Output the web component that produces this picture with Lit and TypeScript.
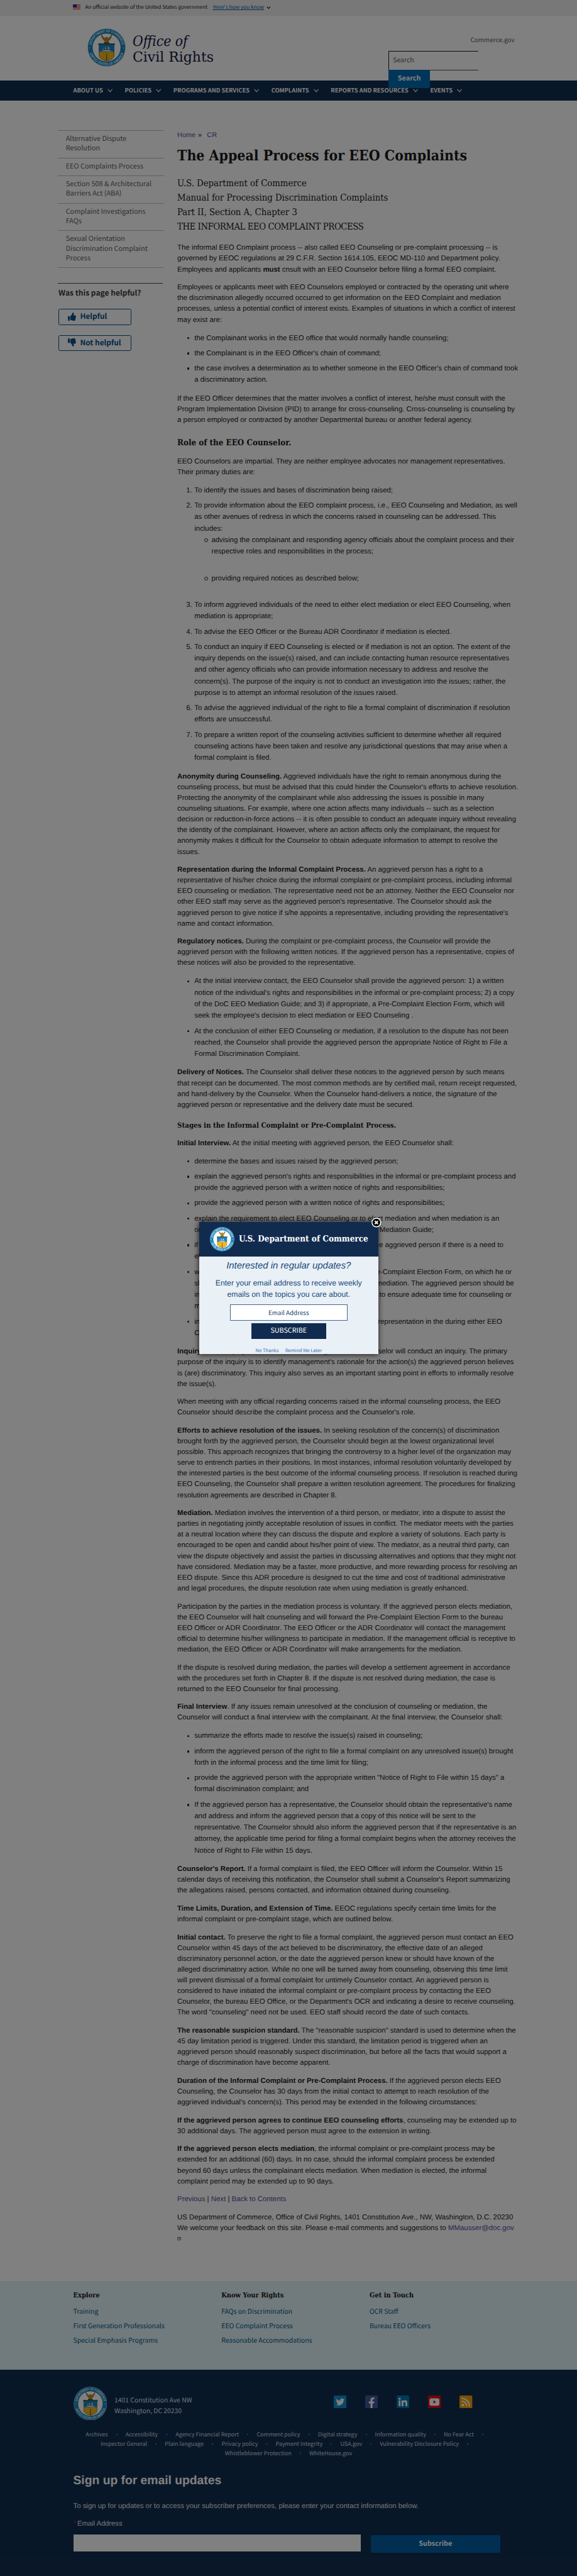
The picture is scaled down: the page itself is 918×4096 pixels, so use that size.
import { LitElement, html, css, svg, nothing } from "lit";
import { customElement, property } from "lit/decorators.js";

type Line = string | [string, string, number];
interface Item { lines: Line[]; sub?: string[][]; }
type Block =
  | { k: "p"; b?: string; t: Line[] }
  | { k: "ul" | "ol"; items: Item[] }
  | { k: "h"; t: string; c: string };

const blocks: Block[] = [
  { k: "p", t: ["The informal EEO Complaint process -- also called EEO Counseling or pre-complaint processing -- is", "governed by EEOC regulations at 29 C.F.R. Section 1614.105, EEOC MD-110 and Department policy.", "Employees and applicants *must* cnsult with an EEO Counselor before filing a formal EEO complaint."] },
  { k: "p", t: ["Employees or applicants meet with EEO Counselors employed or contracted by the operating unit where", "the discrimination allegedly occurred occurred to get information on the EEO Complaint and mediation", "processes, unless a potential conflict of interest exists. Examples of situations in which a conflict of interest", "may exist are:"] },
  { k: "ul", items: [
    { lines: ["the Complainant works in the EEO office that would normally handle counseling;"] },
    { lines: ["the Complainant is in the EEO Officer's chain of command;"] },
    { lines: ["the case involves a determination as to whether someone in the EEO Officer's chain of command took", "a discriminatory action."] }] },
  { k: "p", t: ["If the EEO Officer determines that the matter involves a conflict of interest, he/she must consult with the", "Program Implementation Division (PID) to arrange for cross-counseling. Cross-counseling is counseling by", "a person employed or contracted by another Departmental bureau or another federal agency."] },
  { k: "h", c: "role", t: "Role of the EEO Counselor." },
  { k: "p", t: ["EEO Counselors are impartial. They are neither employee advocates nor management representatives.", "Their primary duties are:"] },
  { k: "ol", items: [
    { lines: ["To identify the issues and bases of discrimination being raised;"] },
    { lines: ["To provide information about the EEO complaint process, i.e., EEO Counseling and Mediation, as well", "as other avenues of redress in which the concerns raised in counseling can be addressed. This", "includes:"],
      sub: [["advising the complainant and responding agency officials about the complaint process and their", "respective roles and responsibilities in the process;"], ["providing required notices as described below;"]] },
    { lines: ["To inform aggrieved individuals of the need to either elect mediation or elect EEO Counseling, when", "mediation is appropriate;"] },
    { lines: ["To advise the EEO Officer or the Bureau ADR Coordinator if mediation is elected."] },
    { lines: ["To conduct an inquiry if EEO Counseling is elected or if mediation is not an option. The extent of the", "inquiry depends on the issue(s) raised, and can include contacting human resource representatives", "and other agency officials who can provide information necessary to address and resolve the", "concern(s). The purpose of the inquiry is not to conduct an investigation into the issues; rather, the", "purpose is to attempt an informal resolution of the issues raised."] },
    { lines: ["To advise the aggrieved individual of the right to file a formal complaint of discrimination if resolution", "efforts are unsuccessful."] },
    { lines: ["To prepare a written report of the counseling activities sufficient to determine whether all required", "counseling actions have been taken and resolve any jurisdictional questions that may arise when a", "formal complaint is filed."] }] },
  { k: "p", b: "Anonymity during Counseling.", t: [" Aggrieved individuals have the right to remain anonymous during the", "counseling process, but must be advised that this could hinder the Counselor's efforts to achieve resolution.", "Protecting the anonymity of the complainant while also addressing the issues is possible in many", "counseling situations. For example, where one action affects many individuals -- such as a selection", "decision or reduction-in-force actions -- it is often possible to conduct an adequate inquiry without revealing", "the identity of the complainant. However, where an action affects only the complainant, the request for", "anonymity makes it difficult for the Counselor to obtain adequate information to attempt to resolve the", "issues."] },
  { k: "p", b: "Representation during the Informal Complaint Process.", t: [" An aggrieved person has a right to a", "representative of his/her choice during the informal complaint or pre-complaint process, including informal", "EEO counseling or mediation. The representative need not be an attorney. Neither the EEO Counselor nor", "other EEO staff may serve as the aggrieved person's representative. The Counselor should ask the", "aggrieved person to give notice if s/he appoints a representative, including providing the representative's", "name and contact information."] },
  { k: "p", b: "Regulatory notices.", t: [" During the complaint or pre-complaint process, the Counselor will provide the", "aggrieved person with the following written notices. If the aggrieved person has a representative, copies of", "these notices will also be provided to the representative."] },
  { k: "ul", items: [
    { lines: ["At the initial interview contact, the EEO Counselor shall provide the aggrieved person: 1) a written", "notice of the individual's rights and responsibilities in the informal or pre-complaint process; 2) a copy", "of the DoC EEO Mediation Guide; and 3) if appropriate, a Pre-Complaint Election Form, which will", "seek the employee's decision to elect mediation or EEO Counseling ."] },
    { lines: ["At the conclusion of either EEO Counseling or mediation, if a resolution to the dispute has not been", "reached, the Counselor shall provide the aggrieved person the appropriate Notice of Right to File a", "Formal Discrimination Complaint."] }] },
  { k: "p", b: "Delivery of Notices.", t: [" The Counselor shall deliver these notices to the aggrieved person by such means", "that receipt can be documented. The most common methods are by certified mail, return receipt requested,", "and hand-delivery by the Counselor. When the Counselor hand-delivers a notice, the signature of the", "aggrieved person or representative and the delivery date must be secured."] },
  { k: "h", c: "stages", t: "Stages in the Informal Complaint or Pre-Complaint Process." },
  { k: "p", b: "Initial Interview.", t: [" At the initial meeting with aggrieved person, the EEO Counselor shall:"] },
  { k: "ul", items: [
    { lines: ["determine the bases and issues raised by the aggrieved person;"] },
    { lines: ["explain the aggrieved person's rights and responsibilities in the informal or pre-complaint process and", "provide the aggrieved person with a written notice of rights and responsibilities;"] },
    { lines: ["provide the aggrieved person with a written notice of rights and responsibilities;"] },
    { lines: ["explain the requirement to elect EEO Counseling or to elect mediation and when mediation is an", ["or", "Mediation Guide;", 560]] },
    { lines: [["if", "the aggrieved person if there is a need to", 723.2], "elect"] },
    { lines: [["with", "Pre-Complaint Election Form, on which he or", 742.8], ["she", "mediation. The aggrieved person should be", 748], ["in", "to ensure adequate time for counseling or", 742.8], "me"] },
    { lines: [["in", "representation in the during either EEO", 720.5], "Co"] }] },
  { k: "p", b: "Inquiry.", t: [" If the employee elects EEO counseling, the EEO Counselor will conduct an inquiry. The primary", "purpose of the inquiry is to identify management's rationale for the action(s) the aggrieved person believes", "is (are) discriminatory. This inquiry also serves as an important starting point in efforts to informally resolve", "the issue(s)."] },
  { k: "p", t: ["When meeting with any official regarding concerns raised in the informal counseling process, the EEO", "Counselor should describe the complaint process and the Counselor's role."] },
  { k: "p", b: "Efforts to achieve resolution of the issues.", t: [" In seeking resolution of the concern(s) of discrimination", "brought forth by the aggrieved person, the Counselor should begin at the lowest organizational level", "possible. This approach recognizes that bringing the controversy to a higher level of the organization may", "serve to entrench parties in their positions. In most instances, informal resolution voluntarily developed by", "the interested parties is the best outcome of the informal counseling process. If resolution is reached during", "EEO Counseling, the Counselor shall prepare a written resolution agreement. The procedures for finalizing", "resolution agreements are described in Chapter 8."] },
  { k: "p", b: "Mediation.", t: [" Mediation involves the intervention of a third person, or mediator, into a dispute to assist the", "parties in negotiating jointly acceptable resolution of issues in conflict. The mediator meets with the parties", "at a neutral location where they can discuss the dispute and explore a variety of solutions. Each party is", "encouraged to be open and candid about his/her point of view. The mediator, as a neutral third party, can", "view the dispute objectively and assist the parties in discussing alternatives and options that they might not", "have considered. Mediation may be a faster, more productive, and more rewarding process for resolving an", "EEO dispute. Since this ADR procedure is designed to cut the time and cost of traditional administrative", "and legal procedures, the dispute resolution rate when using mediation is greatly enhanced."] },
  { k: "p", t: ["Participation by the parties in the mediation process is voluntary. If the aggrieved person elects mediation,", "the EEO Counselor will halt counseling and will forward the Pre-Complaint Election Form to the bureau", "EEO Officer or ADR Coordinator. The EEO Officer or the ADR Coordinator will contact the management", "official to determine his/her willingness to participate in mediation. If the management official is receptive to", "mediation, the EEO Officer or ADR Coordinator will make arrangements for the mediation."] },
  { k: "p", t: ["If the dispute is resolved during mediation, the parties will develop a settlement agreement in accordance", "with the procedures set forth in Chapter 8. If the dispute is not resolved during mediation, the case is", "returned to the EEO Counselor for final processing."] },
  { k: "p", b: "Final Interview", t: [". If any issues remain unresolved at the conclusion of counseling or mediation, the", "Counselor will conduct a final interview with the complainant. At the final interview, the Counselor shall:"] },
  { k: "ul", items: [
    { lines: ["summarize the efforts made to resolve the issue(s) raised in counseling;"] },
    { lines: ["inform the aggrieved person of the right to file a formal complaint on any unresolved issue(s) brought", "forth in the informal process and the time limit for filing;"] },
    { lines: ["provide the aggrieved person with the appropriate written \"Notice of Right to File within 15 days\" a", "formal discrimination complaint; and"] },
    { lines: ["If the aggrieved person has a representative, the Counselor should obtain the representative's name", "and address and inform the aggrieved person that a copy of this notice will be sent to the", "representative. The Counselor should also inform the aggrieved person that if the representative is an", "attorney, the applicable time period for filing a formal complaint begins when the attorney receives the", "Notice of Right to File within 15 days."] }] },
  { k: "p", b: "Counselor's Report.", t: [" If a formal complaint is filed, the EEO Officer will inform the Counselor. Within 15", "calendar days of receiving this notification, the Counselor shall submit a Counselor's Report summarizing", "the allegations raised, persons contacted, and information obtained during counseling."] },
  { k: "p", b: "Time Limits, Duration, and Extension of Time.", t: [" EEOC regulations specify certain time limits for the", "informal complaint or pre-complaint stage, which are outlined below."] },
  { k: "p", b: "Initial contact.", t: [" To preserve the right to file a formal complaint, the aggrieved person must contact an EEO", "Counselor within 45 days of the act believed to be discriminatory, the effective date of an alleged", "discriminatory personnel action, or the date the aggrieved person knew or should have known of the", "alleged discriminatory action. While no one will be turned away from counseling, observing this time limit", "will prevent dismissal of a formal complaint for untimely Counselor contact. An aggrieved person is", "considered to have initiated the informal complaint or pre-complaint process by contacting the EEO", "Counselor, the bureau EEO Office, or the Department's OCR and indicating a desire to receive counseling.", "The word \"counseling\" need not be used. EEO staff should record the date of such contacts."] },
  { k: "p", b: "The reasonable suspicion standard.", t: [" The \"reasonable suspicion\" standard is used to determine when the", "45 day limitation period is triggered. Under this standard, the limitation period is triggered when an", "aggrieved person should reasonably suspect discrimination, but before all the facts that would support a", "charge of discrimination have become apparent."] },
  { k: "p", b: "Duration of the Informal Complaint or Pre-Complaint Process.", t: [" If the aggrieved person elects EEO", "Counseling, the Counselor has 30 days from the initial contact to attempt to reach resolution of the", "aggrieved individual's concern(s). This period may be extended in the following circumstances:"] },
  { k: "p", b: "If the aggrieved person agrees to continue EEO counseling efforts", t: [", counseling may be extended up to", "30 additional days. The aggrieved person must agree to the extension in writing."] },
  { k: "p", b: "If the aggrieved person elects mediation", t: [", the informal complaint or pre-complaint process may be", "extended for an additional (60) days. In no case, should the informal complaint process be extended", "beyond 60 days unless the complainant elects mediation. When mediation is elected, the informal", "complaint period may be extended up to 90 days."] },
];

const inline = (s: string) => s.split("*").map((part, i) => (i % 2 ? html`<b>${part}</b>` : part));
const lines = (ls: Line[], lead?: string) =>
  ls.map((l, i) => html`<div class="line">${i === 0 && lead ? html`<b>${lead}</b>` : nothing}${
    typeof l === "string" ? inline(l) : html`<span class="spread" style="width:${l[2]}px"><span>${l[0]}</span><span>${l[1]}</span></span>`}</div>`);

@customElement("doc-seal")
class DocSeal extends LitElement {
  @property({ type: Number }) size = 90;
  static styles = css`
    :host { display: block; flex: none; }
    svg { display: block; }
    .ring { font: 700 9.6px "Liberation Sans", Arial, sans-serif; fill: #e6f4fb; letter-spacing: 0.35px; }
  `;
  render() {
    return html`<svg width=${this.size} height=${this.size} viewBox="0 0 100 100">
      <circle cx="50" cy="50" r="49.5" fill="#cfe6f2" />
      <circle cx="50" cy="50" r="48.6" fill="#1587c1" />
      <circle cx="50" cy="50" r="37" fill="#fff" stroke="#0d5c8a" stroke-width="1" />
      <defs>
        <path id="top" d="M 10.2 50 A 39.8 39.8 0 0 1 89.8 50" />
        <path id="bot" d="M 3.6 50 A 46.4 46.4 0 0 0 96.4 50" />
      </defs>
      <text class="ring"><textPath href="#top" startOffset="50%" text-anchor="middle" textLength="112" lengthAdjust="spacingAndGlyphs">DEPARTMENT OF COMMERCE</textPath></text>
      <text class="ring"><textPath href="#bot" startOffset="50%" text-anchor="middle" textLength="116" lengthAdjust="spacingAndGlyphs">UNITED STATES OF AMERICA</textPath></text>
      <circle cx="5.6" cy="51" r="1.3" fill="#fff" /><circle cx="94.4" cy="51" r="1.3" fill="#fff" />
      <path d="M36 16 q2 12 10 18 l-2 4 h12 l-2 -4 q8 -6 10 -18 q-5 8 -11 11 q0 -4 -3 -4 q-3 0 -3 4 q-6 -3 -11 -11z" fill="#b98a1c" stroke="#5c4308" stroke-width=".9" />
      <path d="M43 38.5 h14" stroke="#3c2c10" stroke-width="2" />
      <path d="M29 40 h42 v3 h-1.5 v28 q0 9 -19.5 14 q-19.5 -5 -19.5 -14 v-28 h-1.5z" fill="#f2b81f" stroke="#4a3a17" stroke-width="1" />
      <path d="M30 41 h40 v20 h-40z" fill="#1b83bd" />
      <path d="M28.5 41 h43" stroke="#123a55" stroke-width="1.6" />
      <path d="M38 56 h24 l-3 4 h-18z M40 54 l3 -7 v7z M45 54 l2 -9 3 9z M52 54 l2 -9 5 9z" fill="#e8f1f5" stroke="#2b4a5c" stroke-width=".6" />
      <path d="M35 59.5 q7 -2 15 0 t15 0" stroke="#cfe3ee" stroke-width="1" fill="none" />
      <path d="M48.6 83 l.7 -18 h1.6 l.7 18z" fill="#7b5a10" />
    </svg>`;
  }
}

const nav = ["ABOUT US", "POLICIES", "PROGRAMS AND SERVICES", "COMPLAINTS", "REPORTS AND RESOURCES", "EVENTS"];
const side = [["Alternative Dispute", "Resolution"], ["EEO Complaints Process"], ["Section 508 & Architectural", "Barriers Act (ABA)"], ["Complaint Investigations", "FAQs"], ["Sexual Orientation", "Discrimination Complaint", "Process"]];
const cols: [string, string[]][] = [
  ["Explore", ["Training", "First Generation Professionals", "Special Emphasis Programs"]],
  ["Know Your Rights", ["FAQs on Discrimination", "EEO Complaint Process", "Reasonable Accommodations"]],
  ["Get in Touch", ["OCR Staff", "Bureau EEO Officers"]],
];
const legal = [
  ["Archives", "Accessibility", "Agency Financial Report", "Comment policy", "Digital strategy", "Information quality", "No Fear Act", ""],
  ["Inspector General", "Plain language", "Privacy policy", "Payment Integrity", "USA.gov", "Vulnerability Disclosure Policy", ""],
  ["Whistleblower Protection", "WhiteHouse.gov"],
];
const thumb = "M104 224H24c-13.255 0-24 10.745-24 24v240c0 13.255 10.745 24 24 24h80c13.255 0 24-10.745 24-24V248c0-13.255-10.745-24-24-24zM64 472c-13.255 0-24-10.745-24-24s10.745-24 24-24 24 10.745 24 24-10.745 24-24 24zM384 81.452c0 42.416-25.97 66.208-33.277 94.548h101.723c33.397 0 59.397 27.746 59.553 58.098.084 17.938-7.546 37.249-19.439 49.197l-.11.11c9.836 23.337 8.237 56.037-9.308 79.469 8.681 25.895-.069 57.704-16.382 74.757 4.298 17.598 2.244 32.575-6.148 44.632C440.202 511.587 389.616 512 346.839 512l-2.845-.001c-48.287-.017-87.806-17.598-119.56-31.725-15.957-7.099-36.821-15.887-52.651-16.178-6.54-.12-11.783-5.457-11.783-11.998v-213.77c0-3.2 1.282-6.271 3.558-8.521 39.614-39.144 56.648-80.587 89.117-113.111 14.804-14.832 20.188-37.236 25.393-58.902C282.515 39.293 291.817 0 312 0c24 0 72 8 72 81.452z";
const social = [
  svg`<rect width="30" height="30" rx="3" fill="#0f8fd0"/><path transform="translate(5 5) scale(.84)" fill="#fff" d="M23.953 4.57a10 10 0 01-2.825.775 4.958 4.958 0 002.163-2.723c-.951.555-2.005.959-3.127 1.184a4.92 4.92 0 00-8.384 4.482C7.69 8.095 4.067 6.13 1.64 3.162a4.822 4.822 0 00-.666 2.475c0 1.71.87 3.213 2.188 4.096a4.904 4.904 0 01-2.228-.616v.06a4.923 4.923 0 003.946 4.827 4.996 4.996 0 01-2.212.085 4.936 4.936 0 004.604 3.417 9.867 9.867 0 01-6.102 2.105c-.39 0-.779-.023-1.17-.067a13.995 13.995 0 007.557 2.209c9.053 0 13.998-7.496 13.998-13.985 0-.21 0-.42-.015-.63A9.935 9.935 0 0024 4.59z"/>`,
  svg`<rect width="30" height="30" rx="3" fill="#46579c"/><path fill="#fff" d="M12.5 30V18.5H8.5V14h4v-3.4c0-3.7 2.3-5.8 5.7-5.8 1.6 0 2.9.1 3.4.2v4h-2.4c-1.8 0-2.2.9-2.2 2.2V14h4.4l-.6 4.5h-3.8V30z"/>`,
  svg`<rect width="30" height="30" rx="3" fill="#0077b0"/><circle cx="7" cy="7.6" r="2.5" fill="#fff"/><rect x="4.9" y="11.5" width="4.2" height="13.5" fill="#fff"/><path fill="#fff" d="M11.7 11.5h4v1.9c.6-1.1 2-2.2 4-2.2 4.2 0 5.3 2.8 5.3 6.4V25h-4.2v-6.6c0-1.6 0-3.5-2.2-3.5s-2.7 1.7-2.7 3.4V25h-4.2z"/>`,
  svg`<rect width="30" height="30" rx="2" fill="#e20c0c"/><rect x="3.5" y="6.8" width="23" height="17" rx="4" fill="#fff"/><path fill="#c00" d="M12.7 11.3v7.6l6-3.8z"/>`,
  svg`<rect width="30" height="30" rx="3" fill="#f5a000"/><circle cx="7.7" cy="22.3" r="3" fill="#fff"/><path fill="none" stroke="#fff" stroke-width="3.2" d="M5 13.2a11.8 11.8 0 0 1 11.8 11.8M5 6.6a18.4 18.4 0 0 1 18.4 18.4"/>`,
];

@customElement("app-root")
class AppRoot extends LitElement {
  static styles = css`
    :host { display: block; background: #fff; overflow: hidden; }
    * { box-sizing: border-box; }
    .page { zoom: 0.6797; position: relative; height: 6027px; color: #1b1b1b; background: #fff; text-rendering: geometricPrecision; white-space: nowrap;
      font: 400 16.8px/25.2px "Liberation Sans", Arial, sans-serif; }
    .cjk { font-family: "Noto Sans CJK JP", "Open Sans", sans-serif; }
    .serif { font-family: "DejaVu Serif Condensed", "DejaVu Serif", serif; font-stretch: condensed; }
    .banner { height: 37px; background: #f0f0f0; display: flex; align-items: center; padding: 0 0 2px 170px; font-size: 12.08px; line-height: 16px; }
    .banner svg.flag { margin-right: 11px; }
    .banner a { color: #005ea2; text-decoration: underline; margin: 0 6px 0 12.5px; }
    header { height: 152px; display: flex; align-items: flex-start; padding-left: 204.5px; position: relative; z-index: 1; }
    header doc-seal { margin-top: 29.5px; }
    .name { margin: 41px 0 0 16px; width: 599px; color: #15183f; line-height: 38.3px; }
    .name i { display: block; font-size: 33.4px; }
    .name span { display: block; font: 400 32.3px/38.3px "DejaVu Serif", serif; }
    .util { width: 295px; }
    .util .site { text-align: right; font-size: 14.76px; line-height: 20px; margin-top: 46px; color: #5c5c5c; }
    .find { width: 210px; height: 46px; margin-top: 16px; border: 2px solid #1b1b1b; border-right: 0; border-bottom-color: #555; padding-left: 9px; font-size: 15.4px; line-height: 41px; color: #5d5d5d; }
    .go { width: 97px; height: 42.5px; margin-top: -1px; background: #006cb2; color: #fff; border-radius: 0 4px 4px 0; font-weight: 700; font-size: 16px; line-height: 41px; text-align: center; }
    nav { height: 47px; background: #112e51; display: flex; align-items: center; padding: 0 0 2px 171.4px; color: #fff; font-weight: 700; font-size: 13.78px; line-height: 20px; }
    nav div { display: flex; align-items: center; margin-right: 28.5px; }
    nav svg { margin-left: 10px; }
    main { display: flex; height: 5100px; padding-left: 136px; }
    aside { width: 279px; padding-top: 68.3px; }
    .menu { width: 248px; border-top: 1px solid #bdbdbd; color: #626262; font-size: 16.05px; line-height: 22.8px; }
    .menu div.item { padding: 7.6px 18px 9.7px; border-bottom: 1px solid #bdbdbd; }
    .poll { width: 245px; margin-top: 34px; border-top: 1px solid #4a4a4a; padding: 9px 1px 0; }
    .poll h4 { margin: 0 0 25px; font-size: 17.72px; line-height: 26px; color: #3d3d3d; }
    .vote { width: 171px; height: 37px; margin-bottom: 24.3px; border: 2px solid #00508f; border-radius: 4px; display: flex; align-items: center; padding: 0 0 2px 21px; gap: 9px; color: #00508f; font-weight: 700; font-size: 17.47px; line-height: 26px; }
    .flip { transform: scaleY(-1); }
    article { width: 820px; }
    .crumb { padding-top: 68px; font-size: 16px; line-height: 26px; color: #5b459c; display: flex; }
    .crumb i { color: #1b1b1b; font-style: normal; margin: 0 12px 0 6px; }
    h1 { margin: 15px 0 0; font-size: 33.69px; line-height: 44px; font-weight: 700; }
    .intro { margin: 22.9px 0 20.2px; line-height: 34.1px; font-size: 21.7px; }
    .intro div:last-child { letter-spacing: -0.64px; }
    p { margin: 0 0 16.8px; }
    h3 { margin: 0; line-height: 28px; font-weight: 700; }
    .role { font-size: 19.58px; margin: 26.6px 0 17.1px; }
    .stages { font-size: 16.86px; margin: 20.8px 0 15.4px; }
    .list { margin: -0.8px 0 17.9px; padding: 0; line-height: 26.88px; }
    .li { display: flex; margin-bottom: 8.8px; }
    .li:last-child { margin-bottom: 0; }
    .mark { width: 40px; flex: none; display: flex; height: 26.88px; align-items: center; }
    .dot .mark::after { content: ""; width: 5px; height: 5px; border-radius: 50%; background: #1b1b1b; margin-left: 23px; }
    .num > .li > .mark { justify-content: flex-end; padding-right: 5px; }
    .sub .mark::after { content: ""; width: 5.9px; height: 5.9px; border-radius: 50%; border: 1px solid #333; margin-left: 22.5px; }
    .sub .li { padding-bottom: 26.88px; }
    .spread { display: flex; justify-content: space-between; }
    .v { color: #5b459c; }
    .contact svg { display: block; margin-top: 8px; }
    .explore { height: 208px; background: #e1f3f8; padding: 21px 0 0 171.4px; display: flex; }
    .explore > div { width: 346.8px; }
    .explore h5 { margin: 0 0 9.5px; font-size: 16.19px; line-height: 26px; }
    .explore a { display: block; font-size: 15.4px; line-height: 33.4px; color: #00598f; }
    footer { height: 483px; background: #112e51; color: #fff; padding: 39px 171.4px 0; }
    .top { display: flex; }
    .addr { font-size: 15.21px; line-height: 25px; margin: 17.5px 0 0 17.5px; width: 513px; color: #dfe3e8; }
    .soc { display: flex; gap: 43.8px; margin-top: 20.7px; }
    .legal { margin-top: 21px; width: 1008px; font-size: 13.27px; line-height: 22.6px; color: #cfd5dc; }
    .legal div { display: flex; justify-content: center; }
    .legal span:not(:last-child)::after { content: ""; display: inline-block; width: 3px; height: 3px; border-radius: 50%; background: #6f8196; margin: 0 19.25px 3px; }
    footer h2 { margin: 36px 0 0; font-size: 28.39px; line-height: 36px; }
    footer .note { margin-top: 29px; font-size: 16.75px; color: #e6e6e6; }
    footer .lab { margin-top: 15.5px; font-size: 16.5px; color: #e6e6e6; }
    footer .lab span { color: #d8002f; margin-right: 3px; }
    .form { display: flex; margin-top: 11px; }
    .box { width: 673.6px; height: 40.5px; background: #fff; }
    .sub-btn { width: 302.5px; height: 41.5px; margin: 2px 0 0 23px; background: #005ea2; border-radius: 4px; text-align: center; font-size: 15.96px; line-height: 40px; font-weight: 700; }
    .shade { position: absolute; inset: 0; background: rgba(0, 0, 0, 0.498); z-index: 2; }
    .pop { position: absolute; left: 466.2px; top: 2859px; width: 419px; height: 308px; background: #e9f0f6; z-index: 3; box-shadow: 0 1px 12px 2px rgba(0, 0, 0, 0.75); color: #194a7b; text-align: center; }
    .head { height: 81px; background: #112b4f; display: flex; align-items: center; padding-left: 25px; gap: 11px; color: #fff; font-size: 19.81px; font-weight: 700; }
    .ask { font-style: italic; font-size: 21.98px; line-height: 28px; margin-top: 7.5px; }
    .tell { font-size: 17.99px; line-height: 27.3px; margin-top: 12px; }
    .mail { width: 274.5px; height: 38px; margin: 9px auto 0; background: #fff; border: 1px solid #44688f; color: #16406e; font-size: 14.45px; line-height: 36px; }
    .subs { width: 175px; height: 36px; margin: 7px auto 0; background: #112b4f; color: #fff; font-size: 15.84px; line-height: 34px; }
    .later { display: flex; justify-content: center; gap: 15px; margin-top: 19px; font-size: 11px; line-height: 16px; padding-top: 2px; color: #3d75b5; }
    .close { position: absolute; right: -8px; top: -10px; }
  `;

  private block(b: Block) {
    if (b.k === "h") return html`<h3 class="serif ${b.c}">${b.t}</h3>`;
    if (b.k === "p") return html`<p>${lines(b.t, b.b)}</p>`;
    return html`<div class="list ${b.k === "ul" ? "dot" : "num"}">${b.items.map((it, i) => html`<div class="li"><div class="mark">${b.k === "ol" ? `${i + 1}.` : nothing}</div>
      <div>${lines(it.lines)}${it.sub ? html`<div class="sub">${it.sub.map(s => html`<div class="li"><div class="mark"></div><div>${lines(s)}</div></div>`)}</div>` : nothing}</div></div>`)}</div>`;
  }

  render() {
    return html`<div class="page">
      <div class="banner cjk">
        <svg class="flag" width="18.5" height="13" viewBox="0 0 18.5 13"><rect width="18.5" height="13" fill="#fff"/><path d="M0 1h18.5M0 3.6h18.5M0 6.2h18.5M0 8.8h18.5M0 11.4h18.5" stroke="#db3e1f" stroke-width="1.4"/><rect width="9" height="7" fill="#1e33b1"/></svg>
        <span>An official website of the United States government</span><a>Here's how you know</a>
        <svg width="10" height="7" viewBox="0 0 10 7"><path d="M1 1l4 4 4-4" fill="none" stroke="#1b1b1b" stroke-width="1.8"/></svg>
      </div>
      <header>
        <doc-seal .size=${90}></doc-seal>
        <div class="name serif"><i>Office of</i><span>Civil Rights</span></div>
        <div class="util cjk"><div class="site">Commerce.gov</div><div class="find">Search</div><div class="go">Search</div></div>
      </header>
      <nav class="cjk">${nav.map(n => html`<div>${n}<svg width="12.5" height="9" viewBox="0 0 12.5 9"><path d="M1 1.2l5.25 6 5.25-6" fill="none" stroke="#fff" stroke-width="1.5"/></svg></div>`)}</nav>
      <main>
        <aside class="cjk">
          <div class="menu">${side.map(s => html`<div class="item">${s.map(l => html`<div>${l}</div>`)}</div>`)}</div>
          <div class="poll"><h4>Was this page helpful?</h4>
            <div class="vote"><svg width="19" height="19" viewBox="0 0 512 512"><path d=${thumb} fill="currentColor"/></svg>Helpful</div>
            <div class="vote"><svg class="flip" width="19" height="19" viewBox="0 0 512 512"><path d=${thumb} fill="currentColor"/></svg>Not helpful</div>
          </div>
        </aside>
        <article>
          <div class="crumb">Home<i>»</i>CR</div>
          <h1 class="serif">The Appeal Process for EEO Complaints</h1>
          <div class="intro serif"><div>U.S. Department of Commerce</div><div>Manual for Processing Discrimination Complaints</div><div>Part II, Section A, Chapter 3</div><div>THE INFORMAL EEO COMPLAINT PROCESS</div></div>
          ${blocks.map(b => this.block(b))}
          <p><span class="v">Previous</span> | <span class="v">Next</span> | <span class="v">Back to Contents</span></p>
          <div class="contact"><div>US Department of Commerce, Office of Civil Rights, 1401 Constitution Ave., NW, Washington, D.C. 20230</div><div>We welcome your feedback on this site. Please e-mail comments and suggestions to <span class="v">MMausser@doc.gov</span></div>
          <svg width="9" height="8" viewBox="0 0 9 8"><path d="M1 1h7v6h-7zM1 1l3.5 3 3.5-3" fill="none" stroke="#3a3a3a"/></svg></div>
        </article>
      </main>
      <div class="explore cjk">${cols.map(([h, ls]) => html`<div><h5 class="serif">${h}</h5>${ls.map(l => html`<a>${l}</a>`)}</div>`)}</div>
      <footer>
        <div class="top"><doc-seal .size=${79}></doc-seal>
          <div class="addr cjk"><div>1401 Constitution Ave NW</div><div>Washington, DC 20230</div></div>
          <div class="soc">${social.map(s => html`<svg width="30" height="30" viewBox="0 0 30 30">${s}</svg>`)}</div></div>
        <div class="legal cjk">${legal.map(r => html`<div>${r.map(t => html`<span>${t}</span>`)}</div>`)}</div>
        <h2>Sign up for email updates</h2>
        <div class="note">To sign up for updates or to access your subscriber preferences, please enter your contact information below.</div>
        <div class="lab"><span>*</span>Email Address</div>
        <div class="form"><div class="box"></div><div class="sub-btn cjk">Subscribe</div></div>
      </footer>
      <div class="shade"></div>
      <div class="pop">
        <div class="head serif"><doc-seal .size=${57}></doc-seal>U.S. Department of Commerce</div>
        <div class="ask">Interested in regular updates?</div>
        <div class="tell"><div>Enter your email address to receive weekly</div><div>emails on the topics you care about.</div></div>
        <div class="mail cjk">Email Address</div>
        <div class="subs cjk">SUBSCRIBE</div>
        <div class="later cjk"><span>No Thanks</span><span>Remind Me Later</span></div>
        <svg class="close" width="23" height="23" viewBox="0 0 23 23"><circle cx="11.5" cy="11.5" r="10.2" fill="#000" stroke="#fff" stroke-width="2.2"/><path d="M8 8l7 7M15 8l-7 7" stroke="#fff" stroke-width="3"/></svg>
      </div>
    </div>`;
  }
}
